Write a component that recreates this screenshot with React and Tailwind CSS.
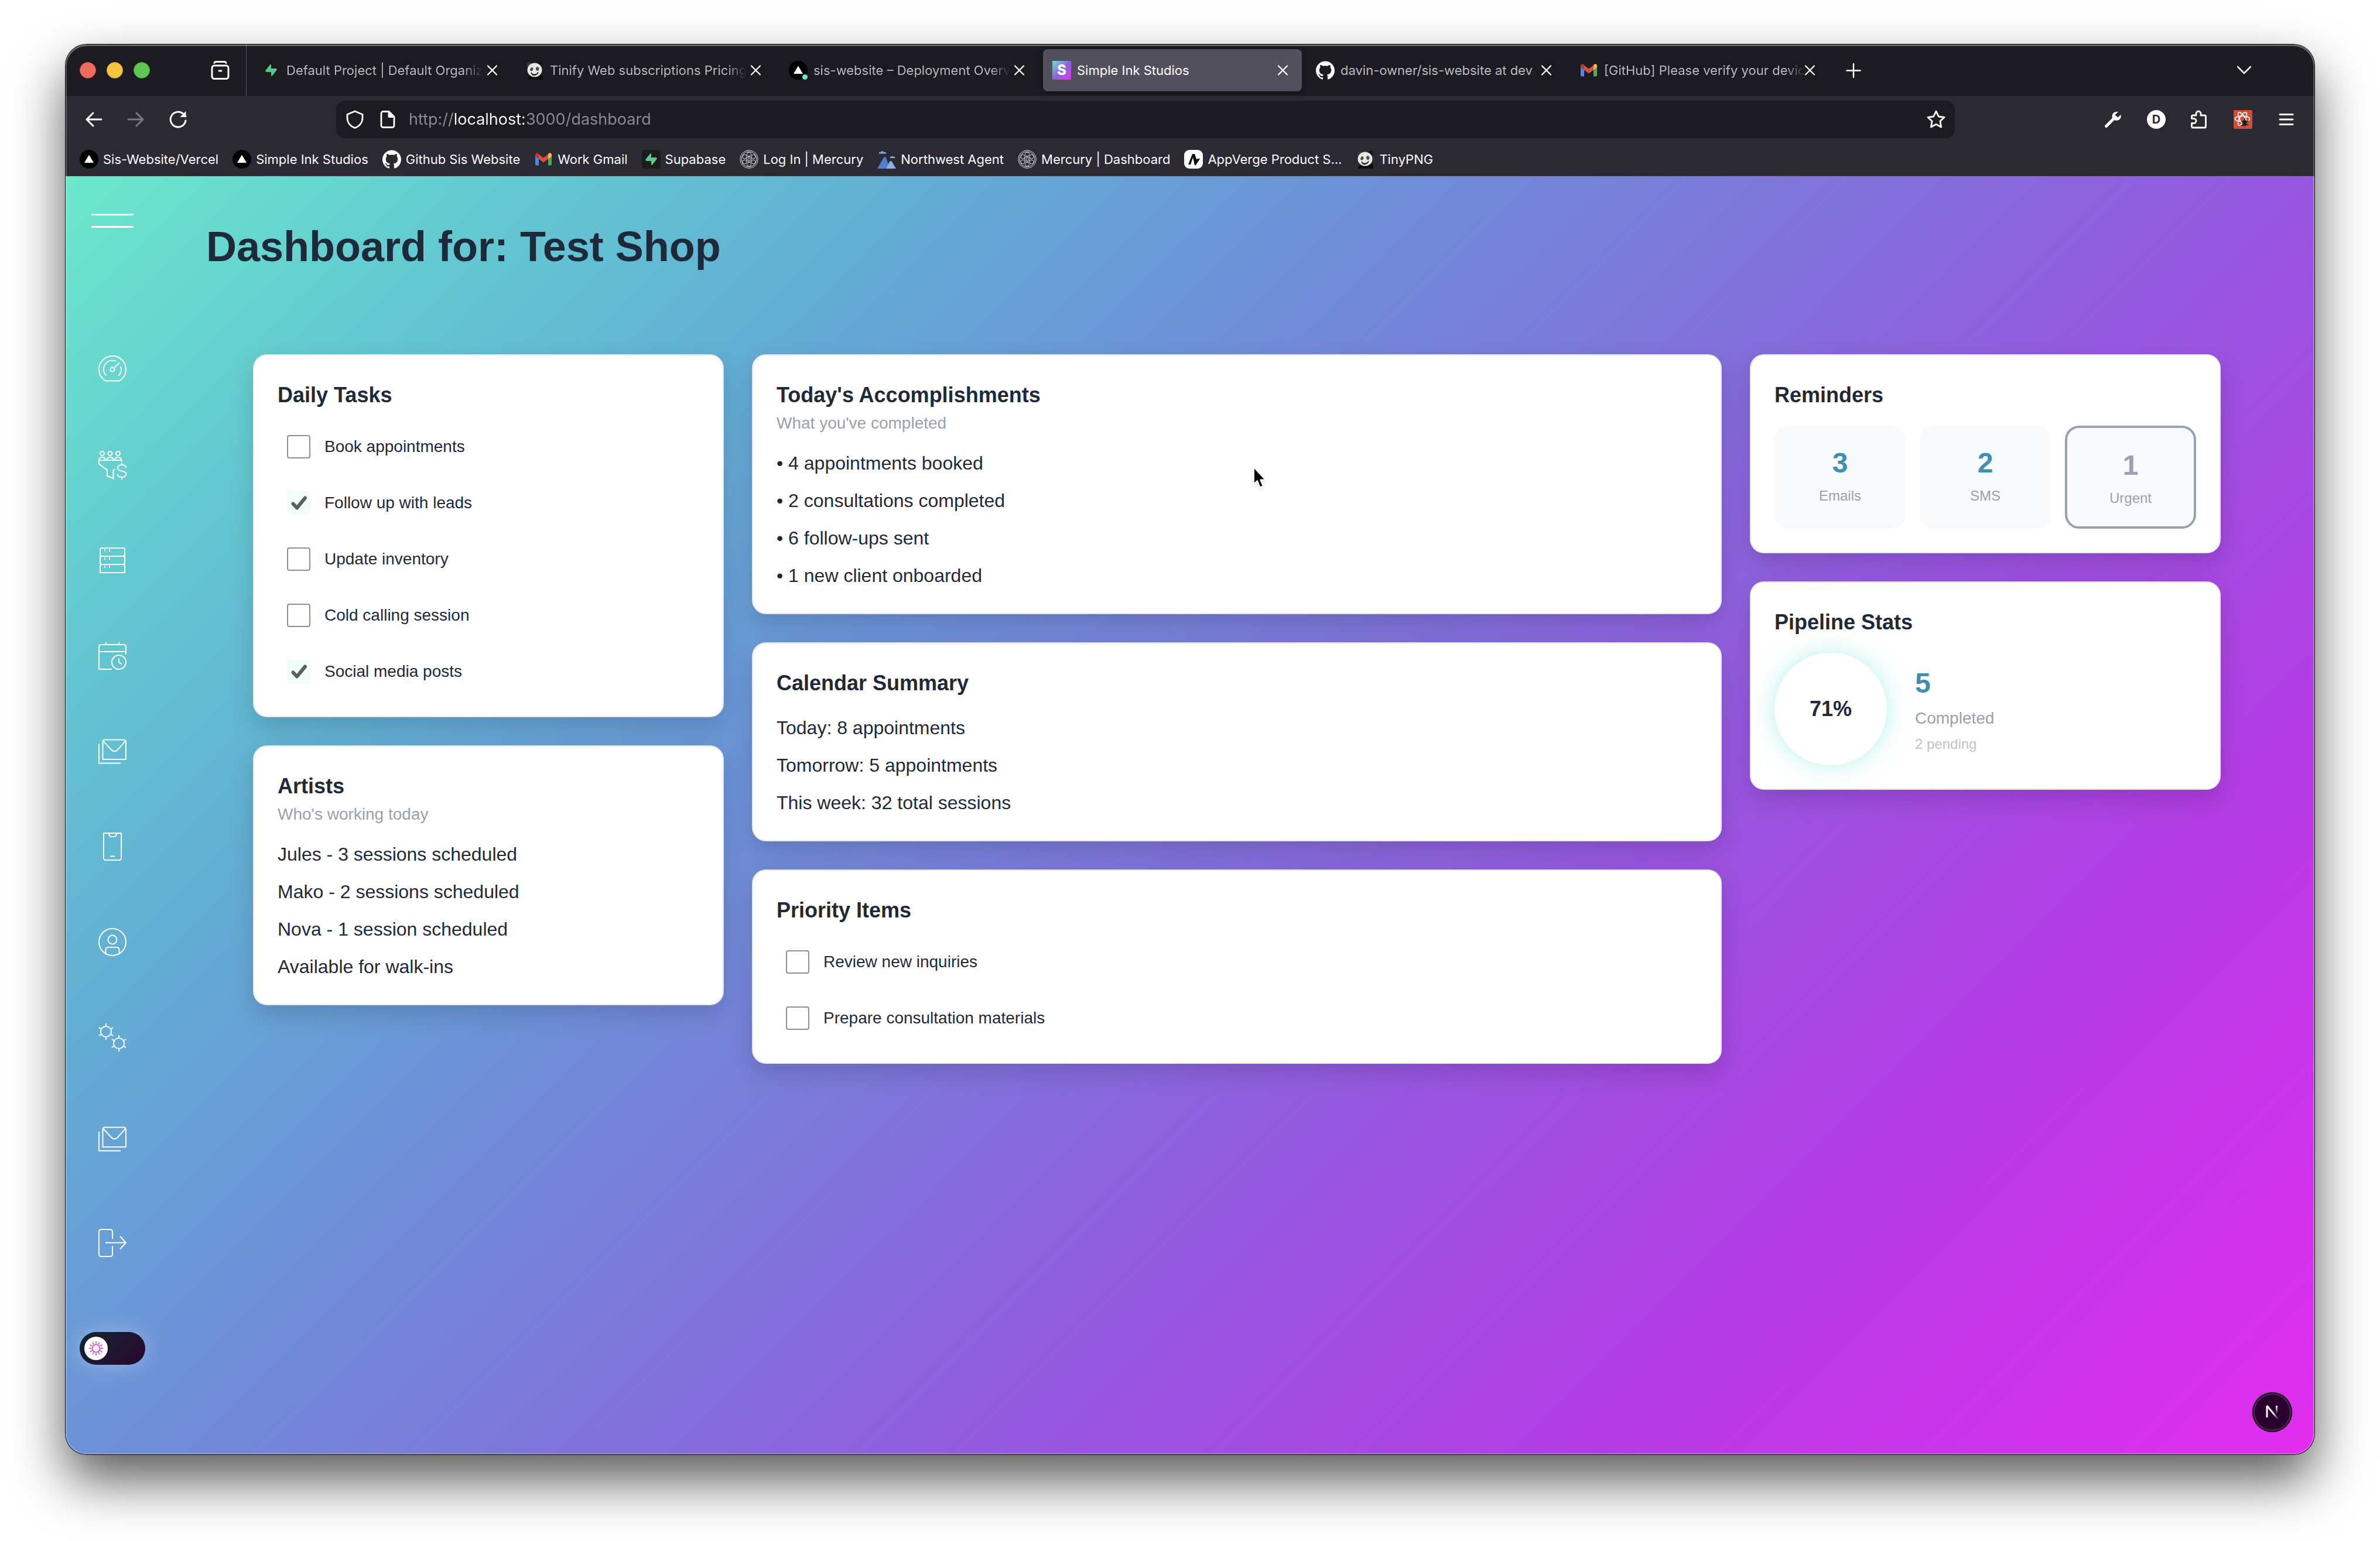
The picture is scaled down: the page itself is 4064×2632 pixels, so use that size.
import React from "react";
import { SiGithub, SiSupabase } from "react-icons/si";

/* ---------- brand marks ---------- */

function VercelMark({ dot }) {
  return (
    <svg viewBox="0 0 32 32" className="size-8 shrink-0" aria-hidden="true">
      <circle cx="16" cy="16" r="16" fill="#000" />
      <path d="M16 8.5 24 22H8z" fill="#fff" />
      {dot && <circle cx="27.5" cy="27.5" r="4.5" fill="#6ee7cb" />}
    </svg>
  );
}

function SupabaseMark() {
  return (
    <span className="grid size-8 shrink-0 place-items-center rounded-sm bg-[#1c1c1c]">
      <SiSupabase className="size-5 text-[#57c78f]" aria-hidden="true" />
    </span>
  );
}

function GithubMark() {
  return <SiGithub className="size-8 shrink-0 text-white" aria-hidden="true" />;
}

function GmailMark() {
  return (
    <svg viewBox="0 0 32 32" className="size-8 shrink-0" aria-hidden="true">
      <path d="M2 9v15.500a2 2 0 0 0 2 2h4V13.500z" fill="#4f86ec" />
      <path d="M30 9v15.500a2 2 0 0 1-2 2h-4V13.500z" fill="#58a55c" />
      <path d="M24 7.500v8l6-4.500V8.500c0-3-3.300-4-5.200-2.600z" fill="#f2bd42" />
      <path d="M8 15.500v-8l8 6 8-6v8l-8 6z" fill="#d95040" />
      <path d="M2 8.500V11l6 4.500v-8l-.8-1.600C5.300 4.500 2 5.500 2 8.500z" fill="#b63a2b" />
    </svg>
  );
}

function PandaMark() {
  return (
    <svg viewBox="0 0 32 32" className="size-8 shrink-0" aria-hidden="true">
      <path d="M4 32c0-5 3-7 8-7h18v7z" fill="#0c0c0e" />
      <circle cx="7" cy="7" r="4.500" fill="#3a3a3e" />
      <circle cx="25" cy="6" r="4.500" fill="#131316" />
      <ellipse cx="16" cy="15.500" rx="12.500" ry="12" fill="#e8e6e2" />
      <path d="M8 15c1-4 4-5 5-3 1 2 0 5-2.500 5.500-1.500 0-2.500-1-2.500-2.500zM18 13c0-3 4-4 5-1 1 2 0 5-2 5s-3-2-3-4z" fill="#4a4a50" />
      <path d="M10 20c2 4 9 5 12-1-2 6-10 8-12 1z" fill="#222" stroke="#222" strokeWidth="1.500" />
    </svg>
  );
}

function MercuryMark() {
  return (
    <svg viewBox="0 0 32 32" className="size-8 shrink-0" fill="none" stroke="#d6d6da" strokeWidth="1" aria-hidden="true">
      <circle cx="16" cy="16" r="15.300" />
      <circle cx="16" cy="16" r="13" />
      <circle cx="16" cy="16" r="4.500" />
      <ellipse cx="16" cy="16" rx="2" ry="3" />
      <circle cx="16" cy="7.500" r="3.500" />
      <circle cx="16" cy="24.500" r="3.500" />
      <circle cx="8.500" cy="11.500" r="3.500" />
      <circle cx="23.500" cy="11.500" r="3.500" />
      <circle cx="8.500" cy="20.500" r="3.500" />
      <circle cx="23.500" cy="20.500" r="3.500" />
    </svg>
  );
}

function MountainMark() {
  return (
    <svg viewBox="0 0 32 32" className="size-8 shrink-0" aria-hidden="true">
      <path d="M0 32 11 13c1-1.500 3-1.500 4 0l6 19z" fill="#4f7fd0" />
      <path d="M15 32l6-12c1-1.500 3-1.500 4 0l7 12z" fill="#8ab0e8" />
      <path d="M3 6.500c-1-3 2-3.500 3-2.500 1-3 5-2.500 5 0 4-1 5 2.500 4 2.500z" fill="#7ea8e6" />
      <path d="M22 14c-1-2 1-3 2-2.500 1-1.500 4-1 4 .5 3-.5 3 2 2 2z" fill="#7ea8e6" />
    </svg>
  );
}

function AppVergeMark() {
  return (
    <svg viewBox="0 0 32 32" className="size-8 shrink-0" aria-hidden="true">
      <rect width="32" height="32" rx="9" fill="#fff" />
      <path d="M7 25 14 7h4l3 9 3-1h3l-7 11h-2l-3-13-4 12z" fill="#0a0a0a" />
    </svg>
  );
}

function StudioMark() {
  return (
    <span className="grid size-8 shrink-0 place-items-center bg-linear-135 from-[#5fe0cf] via-[#8a63db] to-[#dd27ee] text-[24px] leading-none font-extrabold text-white">
      S
    </span>
  );
}

/* ---------- browser chrome ---------- */

function Stroke({ children, className = "size-8", width = 2.5 }) {
  return (
    <svg viewBox="0 0 32 32" className={className} fill="none" stroke="currentColor" strokeWidth={width} strokeLinecap="round" strokeLinejoin="round" aria-hidden="true">
      {children}
    </svg>
  );
}

const tabs = [
  { title: "Default Project | Default Organiz", icon: <SupabaseMark />, fade: true },
  { title: "Tinify Web subscriptions Pricing", icon: <PandaMark />, fade: true },
  { title: "sis-website – Deployment Overv", icon: <VercelMark dot />, fade: true },
  { title: "Simple Ink Studios", icon: <StudioMark />, active: true },
  { title: "davin-owner/sis-website at dev", icon: <GithubMark /> },
  { title: "[GitHub] Please verify your devic", icon: <GmailMark />, fade: true },
];

const bookmarks = [
  { title: "Sis-Website/Vercel", icon: <VercelMark /> },
  { title: "Simple Ink Studios", icon: <VercelMark /> },
  { title: "Github Sis Website", icon: <GithubMark /> },
  { title: "Work Gmail", icon: <GmailMark /> },
  { title: "Supabase", icon: <SupabaseMark /> },
  { title: "Log In | Mercury", icon: <MercuryMark /> },
  { title: "Northwest Agent", icon: <MountainMark /> },
  { title: "Mercury | Dashboard", icon: <MercuryMark /> },
  { title: "AppVerge Product S...", icon: <AppVergeMark /> },
  { title: "TinyPNG", icon: <PandaMark /> },
];

function Tab({ title, icon, active, fade }) {
  return (
    <div className={`flex h-[72px] w-[442px] items-center rounded-lg pl-4 ${active ? "bg-[#52505c] text-white shadow-[0_2px_6px_rgba(0,0,0,0.5)]" : "text-[#bab9bf]"}`}>
      <button type="button" className="flex min-w-0 flex-1 items-center gap-2.5">
        {icon}
        <span className={`flex-1 text-left whitespace-nowrap ${fade ? "mask-r-from-90% mask-r-to-100%" : ""}`}>{title}</span>
      </button>
      <button type="button" aria-label={`Close ${title}`} className="mr-4 grid size-8 place-items-center text-white">
        <Stroke className="size-8" width={2.2}>
          <path d="M8 8.500l15 15M23 8.500l-15 15" />
        </Stroke>
      </button>
    </div>
  );
}

function TabStrip() {
  return (
    <div className="flex h-[88px] items-center bg-[#1c1b22] pl-6 text-[22px] leading-8">
      <div className="flex gap-[18px]">
        <button type="button" aria-label="Close window" className="size-7 rounded-full border border-[#d9534f] bg-[#ed6a5e]" />
        <button type="button" aria-label="Minimize window" className="size-7 rounded-full border border-[#d9a62e] bg-[#f4c63f]" />
        <button type="button" aria-label="Zoom window" className="size-7 rounded-full border border-[#43a548] bg-[#61c555]" />
      </div>
      <button type="button" aria-label="Firefox View" className="ml-[104px] text-white">
        <Stroke width={3}>
          <path d="M6 3.500C6.300 2 7.500 1.500 9 1.500h14c1.500 0 2.700.5 3 2" />
          <rect x="2" y="8" width="28" height="22.500" rx="4" />
          <path d="M14 17h4" />
        </Stroke>
      </button>
      <div className="mr-[10px] ml-7 h-full w-px bg-[#5b5a63]" />
      <div className="flex gap-2">
        {tabs.map((tab) => (
          <Tab key={tab.title} {...tab} />
        ))}
      </div>
      <button type="button" aria-label="New tab" className="ml-[26px] text-white">
        <Stroke width={2.5}>
          <path d="M16 5v23M4.500 16.500h23" />
        </Stroke>
      </button>
      <button type="button" aria-label="List all tabs" className="mr-26 ml-auto text-white">
        <Stroke width={2.5}>
          <path d="M5 10l11 11 11-11" />
        </Stroke>
      </button>
    </div>
  );
}

function NavBar() {
  return (
    <div className="flex h-20 items-center bg-[#2b2a33] pr-8 pl-8 text-white">
      <div className="flex gap-10">
        <button type="button" aria-label="Back">
          <Stroke width={3}>
            <path d="M29 16H4M15 5 4 16l11 11" />
          </Stroke>
        </button>
        <button type="button" aria-label="Forward" className="text-[#7b7a82]">
          <Stroke width={3}>
            <path d="M3 16h25M17 5l11 11-11 11" />
          </Stroke>
        </button>
        <button type="button" aria-label="Reload">
          <Stroke width={3}>
            <path d="M29 18A13 13 0 1 1 25 6.500L29 11" />
            <path d="M29 3v8.500h-8.500z" fill="currentColor" strokeWidth="1" />
          </Stroke>
        </button>
      </div>
      <div className="ml-[254px] flex h-16 min-w-0 flex-1 items-center rounded-2xl bg-[#1c1b22] pr-4 pl-4">
        <Stroke className="size-8 shrink-0" width={2.8}>
          <path d="M16 2 29 7.500v6C29 21 24 27.500 16 30.500 8 27.500 3 21 3 13.500v-6z" />
        </Stroke>
        <Stroke className="ml-6 size-8 shrink-0" width={2.8}>
          <path d="M18 2.500H8a3 3 0 0 0-3 3v21a3 3 0 0 0 3 3h16a3 3 0 0 0 3-3V11.500z" />
          <path d="M18 2.500v9h9z" fill="currentColor" />
        </Stroke>
        <input
          type="text"
          aria-label="Address"
          defaultValue="http://localhost:3000/dashboard"
          className="ml-5 h-10 min-w-0 flex-1 bg-[linear-gradient(90deg,#8c8b92_77px,#ffffff_77px,#ffffff_197px,#8c8b92_197px)] bg-clip-text text-[27px] text-transparent outline-none"
        />
        <button type="button" aria-label="Bookmark this page">
          <Stroke width={2.8}>
            <path d="M16 2l4.300 9 9.700 1.300-7.100 6.800 1.800 9.900L16 24.200 7.300 29l1.800-9.900L2 12.300 11.700 11z" />
          </Stroke>
        </button>
      </div>
      <div className="ml-[254px] flex gap-[42px]">
        <button type="button" aria-label="Developer tools">
          <svg viewBox="0 0 32 32" className="size-8" aria-hidden="true">
            <path d="M4.500 27.500 17 15" stroke="#fff" strokeWidth="5" strokeLinecap="round" />
            <path d="M29.500 8l-5.500 4.500-4.500-4.500L25 3c-5-1.500-10.500 2-10.500 7.500S20 19 24 17.500c4.500-1.200 6.500-5 5.500-9.500z" fill="#fff" />
          </svg>
        </button>
        <button type="button" aria-label="Account" className="grid size-8 place-items-center rounded-full bg-white text-[20px] leading-none font-bold text-[#2b2a33]">
          D
        </button>
        <button type="button" aria-label="Extensions">
          <Stroke width={2.8}>
            <path d="M10 9V6a4 4 0 0 1 8 0v3h6.500a2 2 0 0 1 2 2v17a2 2 0 0 1-2 2h-20a2 2 0 0 1-2-2v-5.500H6a4 4 0 0 0 0-8H2.500V11a2 2 0 0 1 2-2z" />
          </Stroke>
        </button>
        <button type="button" aria-label="React Developer Tools">
          <svg viewBox="0 0 32 32" className="size-8" fill="none" stroke="#fff" strokeWidth="1.600" aria-hidden="true">
            <rect width="32" height="32" rx="2" fill="#cf4e38" stroke="none" />
            <ellipse cx="15" cy="15" rx="12.500" ry="4.800" />
            <ellipse cx="15" cy="15" rx="12.500" ry="4.800" transform="rotate(60 15 15)" />
            <ellipse cx="15" cy="15" rx="12.500" ry="4.800" transform="rotate(120 15 15)" />
            <ellipse cx="19" cy="22" rx="4" ry="5.500" fill="#1d1d20" stroke="none" />
            <path d="M13 19l12 7M25 18l-12 9M19 14v4" stroke="#1d1d20" />
          </svg>
        </button>
        <button type="button" aria-label="Open application menu">
          <Stroke width={3}>
            <path d="M5 7.500h22M5 16h22M5 24.500h22" />
          </Stroke>
        </button>
      </div>
    </div>
  );
}

function BookmarksBar() {
  return (
    <nav aria-label="Bookmarks" className="flex h-[57px] items-center gap-6 border-b border-[#3b3a41] bg-[#2b2a33] pl-6 text-[22px] leading-8 text-[#fbfbfe]">
      {bookmarks.map(({ title, icon }) => (
        <a key={title} href="#" className="flex items-center gap-2 whitespace-nowrap">
          {icon}
          {title}
        </a>
      ))}
    </nav>
  );
}

/* ---------- dashboard sidebar ---------- */

function NavIcon({ children }) {
  return (
    <svg viewBox="0 0 48 48" className="size-12 overflow-visible" fill="none" stroke="#fff" strokeWidth="2" aria-hidden="true">
      {children}
    </svg>
  );
}

const spokes = [0, 60, 120, 180, 240, 300];
const rays = [0, 30, 60, 90, 120, 150, 180, 210, 240, 270, 300, 330];

const mailIcon = (
  <NavIcon>
    <path d="M7.500 38V8a3.500 3.500 0 0 1 3.500-3.500h32.500A3.500 3.500 0 0 1 47 8v30z" />
    <path d="M8 6.500 22 21.500c3.500 3.500 7.500 3.500 11 0L46.500 6.500" />
    <path d="M1 11.500v33h37" />
  </NavIcon>
);

const navItems = [
  {
    label: "Dashboard",
    icon: (
      <NavIcon>
        <path d="M12 43.500A23 23 0 1 1 36 43.500z" />
        <path d="M13.500 34.500A15 15 0 0 1 30.500 10.200M38 18.500a15 15 0 0 1-3.500 16" />
        <circle cx="24" cy="24" r="3.500" />
        <path d="M26.500 21.500 36 12.500" />
      </NavIcon>
    ),
  },
  {
    label: "Leads",
    icon: (
      <NavIcon>
        <circle cx="6.500" cy="4.500" r="3.500" />
        <circle cx="20" cy="4.500" r="3.500" />
        <circle cx="33.500" cy="4.500" r="3.500" />
        <path d="M1 16c0-3.500 2.500-5 5.500-5s5.500 1.500 5.500 5M14.500 16c0-3.500 2.500-5 5.500-5s5.500 1.500 5.500 5M28 16c0-3.500 2.500-5 5.500-5s5.500 1.500 5.500 5" />
        <path d="M40 18v-2H1v6.500L15 33v10l10.500 4V33.500L28 31" />
        <path d="M47 29c0-3.500-3-5-7-5s-7 2-7 5.200 3 4.600 7 5.300 7.500 2 7.500 5.300S44 45 40 45s-7.500-1.800-7.500-5.500M40 20v4M40 45v4" />
      </NavIcon>
    ),
  },
  {
    label: "Inventory",
    icon: (
      <NavIcon>
        <rect x="3" y="3" width="42" height="14" rx="3" />
        <rect x="3" y="17" width="42" height="14" rx="3" />
        <path d="M3 45V34a3 3 0 0 1 3-3h36a3 3 0 0 1 3 3v11z" />
        <path d="M11 5v4M19 5v4M11 19v4M19 19v4M11 33v4M19 33v4" />
      </NavIcon>
    ),
  },
  {
    label: "Calendar",
    icon: (
      <NavIcon>
        <path d="M23 47H1V8.500A3.500 3.500 0 0 1 4.500 5h39A3.500 3.500 0 0 1 47 8.500V22" />
        <path d="M1 17h46M13 0v5M35 0v5" />
        <circle cx="35" cy="35" r="12" />
        <path d="M35 29v6l4.500 3.500" />
      </NavIcon>
    ),
  },
  { label: "Email", icon: mailIcon },
  {
    label: "Messages",
    icon: (
      <NavIcon>
        <path d="M9 1h30v42.500a3.500 3.500 0 0 1-3.500 3.500h-23A3.500 3.500 0 0 1 9 43.500z" />
        <path d="M18 1c0 4 1 6 4 6h5c3 0 4-2 4-6M20 40.500h8" />
      </NavIcon>
    ),
  },
  {
    label: "Profile",
    icon: (
      <NavIcon>
        <circle cx="24" cy="24" r="23" />
        <circle cx="24" cy="20" r="7.500" />
        <path d="M12.500 44v-7a4 4 0 0 1 4-4h15a4 4 0 0 1 4 4v7" />
      </NavIcon>
    ),
  },
  {
    label: "Settings",
    icon: (
      <NavIcon>
        {[[13, 14], [35, 34]].map(([x, y]) => (
          <g key={x} transform={`translate(${x} ${y})`}>
            <circle r="9" />
            {spokes.map((a) => (
              <path key={a} d="M0-9v-5" transform={`rotate(${a})`} />
            ))}
          </g>
        ))}
      </NavIcon>
    ),
  },
  { label: "Inbox", icon: mailIcon, className: "mt-[10px]" },
  {
    label: "Log out",
    className: "mt-[15px]",
    icon: (
      <NavIcon>
        <path d="M24 17V4.500A3.500 3.500 0 0 0 20.500 1h-16A3.500 3.500 0 0 0 1 4.500v39A3.500 3.500 0 0 0 4.500 47h16a3.500 3.500 0 0 0 3.500-3.500V29" />
        <path d="M12 23.500h35M37 12.500l10 11-10 11" />
      </NavIcon>
    ),
  },
];

function Sidebar() {
  return (
    <aside className="flex w-40 shrink-0 flex-col items-center pt-16">
      <button type="button" aria-label="Open menu" className="flex w-[72px] flex-col gap-[18px]">
        <span className="h-[3px] w-full bg-white" />
        <span className="h-[3px] w-full bg-white" />
      </button>
      <nav aria-label="Main" className="mt-[218px] flex flex-col gap-[115px]">
        {navItems.map(({ label, icon, className = "" }) => (
          <a key={label} href="#" aria-label={label} className={className}>
            {icon}
          </a>
        ))}
      </nav>
      <label className="relative mt-32 flex">
        <input type="checkbox" role="switch" aria-label="Dark theme" className="h-14 w-28 appearance-none rounded-full bg-linear-135 from-[#0d2433] to-[#28042f] shadow-[0_0_36px_rgba(255,255,255,0.3)]" />
        <span className="absolute top-2 left-2 grid size-10 place-items-center rounded-full bg-white">
          <svg viewBox="-14 -14 28 28" className="size-7" fill="none" stroke="#e02bee" strokeWidth="1.500" aria-hidden="true">
            <circle r="6.500" />
            {rays.map((a) => (
              <path key={a} d="M0-8v-4" transform={`rotate(${a})`} />
            ))}
          </svg>
        </span>
      </label>
    </aside>
  );
}

/* ---------- dashboard cards ---------- */

function Card({ title, subtitle, children }) {
  return (
    <section className="rounded-3xl border-2 border-gray-200 bg-white p-10 shadow-[0_16px_40px_rgba(0,0,0,0.15)]">
      <h2 className="text-[36px] leading-14 font-bold">{title}</h2>
      {subtitle && <p className="text-[28px] leading-10 text-gray-400">{subtitle}</p>}
      <div className="mt-6">{children}</div>
    </section>
  );
}

function Lines({ items }) {
  return (
    <ul className="flex flex-col gap-4 text-[32px] leading-12">
      {items.map((item) => (
        <li key={item}>{item}</li>
      ))}
    </ul>
  );
}

function Checklist({ items }) {
  return (
    <ul className="flex flex-col gap-6 text-[28px] leading-10">
      {items.map(({ label, done }) => (
        <li key={label}>
          <label className="flex items-center gap-6 p-4">
            <span className="grid size-10 shrink-0">
              <input
                type="checkbox"
                defaultChecked={done}
                className="peer col-start-1 row-start-1 size-10 appearance-none rounded-sm border-2 border-[#8f8f9d] bg-white checked:border-0 checked:bg-[#f0fdf9]"
              />
              <svg viewBox="0 0 40 40" className="invisible col-start-1 row-start-1 size-10 peer-checked:visible" fill="none" stroke="#5b5f5e" strokeWidth="6" strokeLinecap="round" strokeLinejoin="round" aria-hidden="true">
                <path d="M10.500 21.500 17 28.500 31 11.500" />
              </svg>
            </span>
            {label}
          </label>
        </li>
      ))}
    </ul>
  );
}

function Reminder({ count, label, urgent }) {
  return (
    <div className={`rounded-3xl bg-[#f9fafc] py-8 text-center ${urgent ? "border-4 border-gray-400" : ""}`}>
      <p className={`text-[48px] leading-16 font-bold ${urgent ? "text-gray-400" : "text-[#3e8fb0]"}`}>{count}</p>
      <p className="mt-2 text-[24px] leading-8 text-gray-400">{label}</p>
    </div>
  );
}

function Dashboard() {
  return (
    <main className="min-w-0 flex-1 p-20 text-gray-800">
      <h1 className="text-[72px] leading-20 font-bold">Dashboard for: Test Shop</h1>
      <div className="mt-36 grid grid-cols-12 items-start gap-12 px-20">
        <div className="col-span-3 flex flex-col gap-12">
          <Card title="Daily Tasks">
            <Checklist
              items={[
                { label: "Book appointments" },
                { label: "Follow up with leads", done: true },
                { label: "Update inventory" },
                { label: "Cold calling session" },
                { label: "Social media posts", done: true },
              ]}
            />
          </Card>
          <Card title="Artists" subtitle="Who's working today">
            <Lines items={["Jules - 3 sessions scheduled", "Mako - 2 sessions scheduled", "Nova - 1 session scheduled", "Available for walk-ins"]} />
          </Card>
        </div>
        <div className="relative col-span-6 flex flex-col gap-12">
          <Card title="Today's Accomplishments" subtitle="What you've completed">
            <Lines items={["• 4 appointments booked", "• 2 consultations completed", "• 6 follow-ups sent", "• 1 new client onboarded"]} />
          </Card>
          <Card title="Calendar Summary">
            <Lines items={["Today: 8 appointments", "Tomorrow: 5 appointments", "This week: 32 total sessions"]} />
          </Card>
          <Card title="Priority Items">
            <Checklist items={[{ label: "Review new inquiries" }, { label: "Prepare consultation materials" }]} />
          </Card>
          <svg viewBox="0 0 24 36" className="absolute top-48 left-[855px] h-9 w-6 drop-shadow-md" aria-hidden="true">
            <path d="M2 1.500v28l6-5.500 4.500 11 5-2-4.500-10.500h8.500z" fill="#000" stroke="#fff" strokeWidth="1.800" strokeLinejoin="round" />
          </svg>
        </div>
        <div className="col-span-3 flex flex-col gap-12">
          <Card title="Reminders">
            <div className="grid grid-cols-3 gap-6">
              <Reminder count="3" label="Emails" />
              <Reminder count="2" label="SMS" />
              <Reminder count="1" label="Urgent" urgent />
            </div>
          </Card>
          <Card title="Pipeline Stats">
            <div className="flex items-center gap-12">
              <div className="grid size-48 shrink-0 place-items-center rounded-full bg-white text-[36px] leading-none font-bold shadow-[0_0_40px_rgba(110,231,215,0.5)]">71%</div>
              <div>
                <p className="text-[48px] leading-16 font-bold text-[#3e8fb0]">5</p>
                <p className="mt-2 text-[28px] leading-10 text-gray-400">Completed</p>
                <p className="mt-2 text-[24px] leading-8 text-[#bfc3ca]">2 pending</p>
              </div>
            </div>
          </Card>
        </div>
      </div>
    </main>
  );
}

function NextBadge() {
  return (
    <button type="button" aria-label="Open Next.js Dev Tools" className="absolute right-[38px] bottom-[38px] grid size-[68px] place-items-center rounded-full bg-[#2a002e] shadow-[inset_0_0_0_2px_#1c1420,inset_0_0_0_4px_#4d2a52]">
      <svg viewBox="0 0 24 26" className="h-[26px] w-6" fill="none" strokeWidth="3" aria-hidden="true">
        <defs>
          <linearGradient id="diagonal" gradientUnits="userSpaceOnUse" x1="13" y1="14" x2="22" y2="25">
            <stop stopColor="#fff" />
            <stop offset="1" stopColor="#fff" stopOpacity="0" />
          </linearGradient>
          <linearGradient id="stem" gradientUnits="userSpaceOnUse" x1="0" y1="2" x2="0" y2="16">
            <stop stopColor="#fff" />
            <stop offset="1" stopColor="#fff" stopOpacity="0" />
          </linearGradient>
        </defs>
        <path d="M3 22V2" stroke="#fff" />
        <path d="M3 2l19 23" stroke="url(#diagonal)" />
        <path d="M19.500 2v14" stroke="url(#stem)" />
      </svg>
    </button>
  );
}

export default function App() {
  return (
    <div className="flex min-h-screen bg-white px-28 pt-[76px] pb-[148px]">
      <div className="relative flex min-w-0 flex-1 flex-col overflow-hidden rounded-[36px] shadow-[0_0_0_1px_#000,0_44px_90px_rgba(0,0,0,0.65)]">
        <header className="font-['Inter',sans-serif]">
          <TabStrip />
          <NavBar />
          <BookmarksBar />
        </header>
        <div className="relative flex flex-1 bg-[linear-gradient(135deg,#6ce8cc_0%,#64cbd1_12%,#62afd4_24%,#6c93d8_36%,#7f74db_50%,#9856e0_64%,#b53be4_80%,#e22dee_100%)] font-['Liberation_Sans',Arial,sans-serif]">
          <Sidebar />
          <Dashboard />
          <NextBadge />
        </div>
        <div className="pointer-events-none absolute inset-0 rounded-[36px] shadow-[inset_0_0_0_2px_rgba(255,255,255,0.2),inset_0_2px_0_1px_rgba(255,255,255,0.2)]" />
      </div>
    </div>
  );
}
